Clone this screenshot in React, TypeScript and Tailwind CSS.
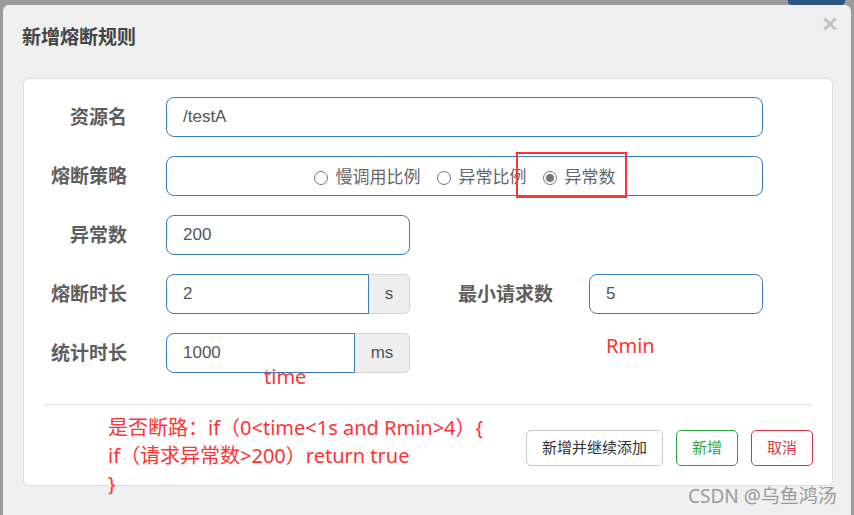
const cjk = "font-['Liberation_Sans','Noto_Sans_CJK_SC',sans-serif]";
const note = "font-['Noto_Sans','Noto_Sans_CJK_SC',sans-serif]";

function Label({ text, className = "" }: { text: string; className?: string }) {
  return (
    <div
      className={`shrink-0 pt-[2px] text-right text-[19px] font-bold text-[#5e5e5e] ${className}`}
    >
      {text}
    </div>
  );
}

function TextInput({ value, className = "" }: { value: string; className?: string }) {
  return (
    <div
      className={`flex h-10 items-center rounded-lg border border-[#3c7cb9] bg-white pl-4 text-[17px] text-[#555] ${className}`}
    >
      {value}
    </div>
  );
}

function AddonInput({
  value,
  unit,
  unitWidth,
}: {
  value: string;
  unit: string;
  unitWidth: string;
}) {
  return (
    <div className="flex h-10 w-[244px] text-[17px] text-[#555]">
      <div className="flex flex-1 items-center rounded-l-lg border border-[#3c7cb9] bg-white pl-4">
        {value}
      </div>
      <div
        className={`flex items-center justify-center rounded-r-md border border-l-0 border-[#d4d4d4] bg-[#eeeeee] ${unitWidth}`}
      >
        {unit}
      </div>
    </div>
  );
}

function Radio({ label, checked }: { label: string; checked?: boolean }) {
  return (
    <span className="flex items-center">
      <span className="flex h-[14px] w-[14px] items-center justify-center rounded-full border border-[#777] bg-white">
        {checked && <span className="h-[8px] w-[8px] rounded-full bg-[#777]" />}
      </span>
      <span className="ml-[8px] text-[17px] text-[#666]">{label}</span>
    </span>
  );
}

export default function App() {
  return (
    <div className={`relative h-[515px] w-[854px] overflow-hidden bg-[#9b9b9b] ${cjk}`}>
      {/* page behind the backdrop */}
      <div className="flex h-[5px] justify-end pr-[9px]">
        <div className="w-[57px] rounded-b-sm bg-[#2c5582]" />
      </div>

      {/* modal */}
      <div className="ml-[3px] h-[540px] w-[848px] rounded-t-md bg-[#f0f0f0] pl-[20px] pr-[18px]">
        <div className="flex items-start justify-between pt-[12px]">
          <h1 className="-ml-px mt-[9px] text-[19px] font-bold leading-6 text-[#444]">新增熔断规则</h1>
          <svg width="14" height="14" viewBox="0 0 14 14" className="-mr-[4px]">
            <path d="M1.5 1.5 L12.5 12.5 M12.5 1.5 L1.5 12.5" stroke="#c2c2c2" strokeWidth="3" />
          </svg>
        </div>

        <div className="relative mt-[28px] rounded-md border border-[#dddddd] bg-white">
          <div className="flex flex-col gap-[19px] pt-[18px]">
            <div className="flex items-center">
              <Label text="资源名" className="w-[103px]" />
              <TextInput value="/testA" className="ml-[39px] w-[597px]" />
            </div>

            <div className="flex items-center">
              <Label text="熔断策略" className="w-[103px]" />
              <div className="ml-[39px] flex h-10 w-[597px] items-center justify-center gap-[16px] rounded-lg border border-[#3c7cb9] bg-white pt-[3px]">
                <Radio label="慢调用比例" />
                <Radio label="异常比例" />
                <span className="relative">
                  <Radio label="异常数" checked />
                  <span className="absolute -bottom-[8px] -left-[27px] -right-[11px] -top-[13px] border-2 border-[#f33]" />
                </span>
              </div>
            </div>

            <div className="flex items-center">
              <Label text="异常数" className="w-[103px]" />
              <TextInput value="200" className="ml-[39px] w-[244px]" />
            </div>

            <div className="flex items-center">
              <Label text="熔断时长" className="w-[103px]" />
              <div className="ml-[39px]">
                <AddonInput value="2" unit="s" unitWidth="w-[41px]" />
              </div>
              <Label text="最小请求数" className="ml-[48px]" />
              <TextInput value="5" className="ml-[36px] w-[174px]" />
            </div>

            <div className="flex items-center">
              <Label text="统计时长" className="w-[103px]" />
              <div className="ml-[39px]">
                <AddonInput value="1000" unit="ms" unitWidth="w-[55px]" />
              </div>
            </div>
          </div>

          <div className="mx-[19px] mt-[31px] border-t border-[#e2e2e2]" />

          <div className="flex justify-end gap-[13px] pb-[19px] pr-[19px] pt-[25px] text-[15px]">
            <button className="h-9 w-[137px] rounded-[5px] border border-[#cccccc] bg-white text-[#333]">
              新增并继续添加
            </button>
            <button className="h-9 w-[62px] rounded-[5px] border border-[#28a745] bg-white text-[#28a745]">
              新增
            </button>
            <button className="h-9 w-[62px] rounded-[5px] border border-[#dc3545] bg-white text-[#dc3545]">
              取消
            </button>
          </div>

          {/* red annotations drawn over the form */}
          <span className={`absolute left-[240px] top-[284px] text-[20px] leading-7 text-[#f33] ${note}`}>time</span>
          <span className={`absolute left-[582px] top-[253px] text-[20px] leading-7 text-[#f33] ${note}`}>Rmin</span>
          <div className={`absolute left-[84px] top-[335px] text-[20px] leading-7 text-[#f33] ${note}`}>
            <div>是否断路：if（0&lt;time&lt;1s and Rmin&gt;4）{"{"}</div>
            <div>if（请求异常数&gt;200）return true</div>
            <div>{"}"}</div>
          </div>
        </div>
      </div>

      <div className={`absolute left-[688px] top-[482px] text-[19px] leading-7 text-[#9a9a9a] ${note}`}>
        CSDN @乌鱼鸿汤
      </div>
    </div>
  );
}
